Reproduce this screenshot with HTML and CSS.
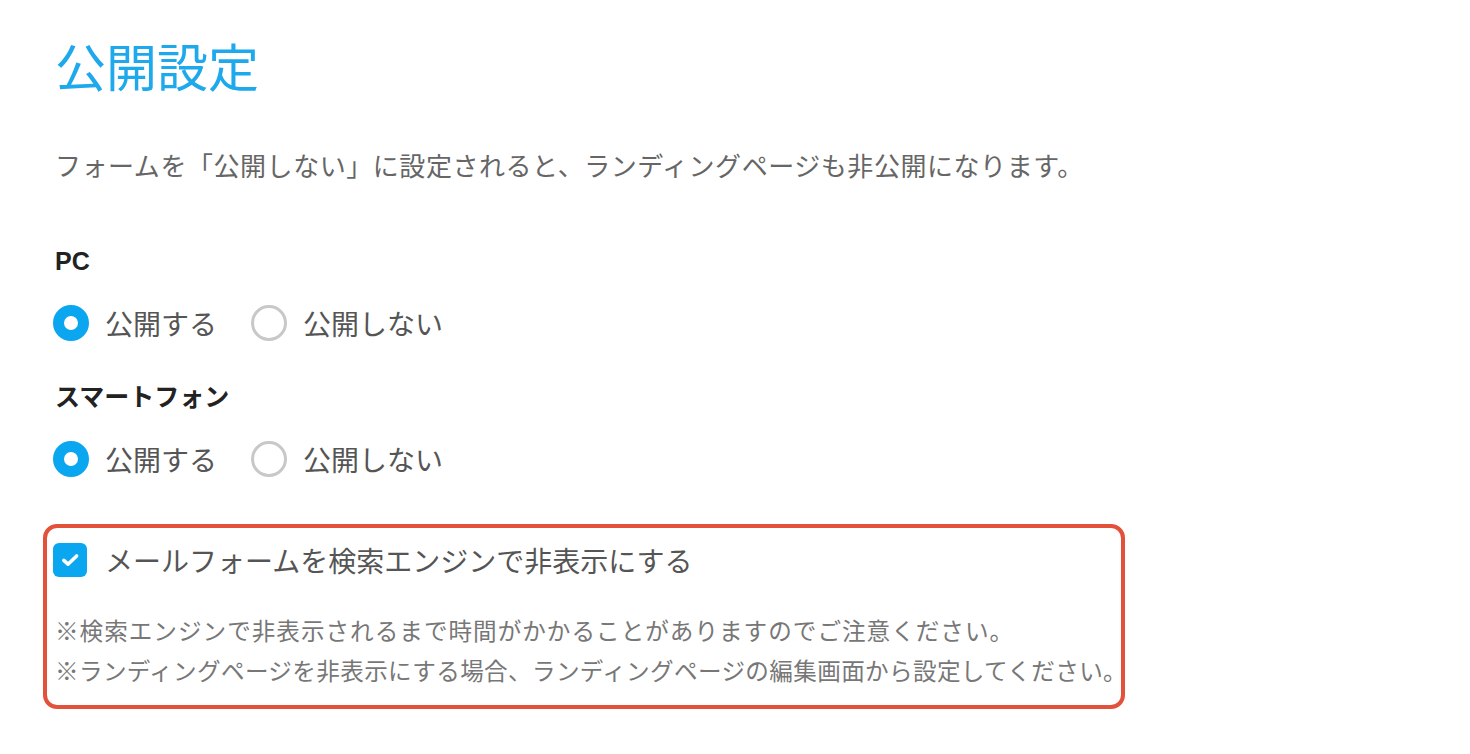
FILE: index.html
```html
<!DOCTYPE html>
<html lang="ja">
<head>
  <meta charset="UTF-8" />
  <meta name="viewport" content="width=device-width, initial-scale=1.0" />
  <title>公開設定</title>
  <link rel="stylesheet" href="styles.css">
</head>
<body>
  <div class="container">
    <h1 class="title">公開設定</h1>
    <p class="lead">フォームを「公開しない」に設定されると、ランディングページも非公開になります。</p>

    <!-- PC -->
    <div class="group">
      <h2 class="group-label">PC</h2>
      <div class="radio-row">
        <label class="radio">
          <input type="radio" name="pc" checked>
          <span class="radio-mark"></span>
          <span class="radio-text">公開する</span>
        </label>
        <label class="radio">
          <input type="radio" name="pc">
          <span class="radio-mark"></span>
          <span class="radio-text">公開しない</span>
        </label>
      </div>
    </div>

    <!-- スマートフォン -->
    <div class="group">
      <h2 class="group-label">スマートフォン</h2>
      <div class="radio-row">
        <label class="radio">
          <input type="radio" name="sp" checked>
          <span class="radio-mark"></span>
          <span class="radio-text">公開する</span>
        </label>
        <label class="radio">
          <input type="radio" name="sp">
          <span class="radio-mark"></span>
          <span class="radio-text">公開しない</span>
        </label>
      </div>
    </div>

    <!-- Search engine setting (highlighted) -->
    <div class="notice-box">
      <label class="checkbox">
        <input type="checkbox" checked>
        <span class="check-mark">
          <svg viewBox="0 0 34 34" width="34" height="34">
            <path d="M10.8 17.4 L15 21.2 L23.6 13" fill="none" stroke="#fff" stroke-width="3.6" stroke-linecap="round" stroke-linejoin="round"/>
          </svg>
        </span>
        <span class="check-text">メールフォームを検索エンジンで非表示にする</span>
      </label>
      <p class="note note-first">※検索エンジンで非表示されるまで時間がかかることがありますのでご注意ください。</p>
      <p class="note">※ランディングページを非表示にする場合、ランディングページの編集画面から設定してください。</p>
    </div>
  </div>
</body>
</html>
```

FILE: styles.css
```css
/* Base styling */
body {
  font-family: "Noto Sans CJK JP", "Noto Sans", sans-serif;
  background-color: #fff;
  color: #555;
  margin: 0;
  padding: 0;
}
.container {
  padding: 35px 0 0 55px;
}
.title {
  margin: 0;
  font-size: 51px;
  line-height: 60px;
  font-weight: 400;
  color: #1ea9ec;
}
.lead {
  margin: 50px 0 0;
  font-size: 26px;
  line-height: 40px;
  letter-spacing: 0.55px;
  color: #666;
}
/* Radio groups */
.group-label {
  margin: 0;
  font-family: "Liberation Sans", "Noto Sans CJK JP", sans-serif;
  font-size: 25px;
  line-height: 36px;
  font-weight: 700;
  color: #222;
}
.group:first-of-type .group-label {
  margin-top: 58px;
}
.group + .group .group-label {
  margin-top: 36px;
}
.radio-row {
  display: flex;
  gap: 36px;
  margin-top: 24px;
}
.radio {
  display: flex;
  align-items: center;
  gap: 16px;
  height: 40px;
  cursor: pointer;
}
.radio input,
.checkbox input {
  display: none;
}
.radio-mark {
  width: 36px;
  height: 36px;
  margin-left: -2px;
  box-sizing: border-box;
  border: 3px solid #c8c8c8;
  border-radius: 50%;
  background: #fff;
}
.radio input:checked + .radio-mark {
  border: 11px solid #0aa6f0;
}
.radio-text {
  font-size: 28px;
  color: #555;
}
/* Highlighted box */
.notice-box {
  box-sizing: border-box;
  width: 1082px;
  margin: 45px 0 0 -12px;
  padding: 15px 0 15px 6px;
  border: 4px solid #e4513b;
  border-radius: 14px;
}
.checkbox {
  display: flex;
  align-items: center;
  gap: 18px;
  height: 34px;
  cursor: pointer;
}
.check-mark {
  display: flex;
  width: 34px;
  height: 34px;
  border-radius: 6px;
  background: #0aa6f0;
}
.check-text {
  font-size: 28px;
  color: #555;
}
.note {
  margin: 0;
  padding-left: 2px;
  font-size: 23.6px;
  line-height: 40px;
  letter-spacing: 0.35px;
  white-space: nowrap;
  color: #777;
}
.note-first {
  margin-top: 33px;
  letter-spacing: 1px;
}
```
